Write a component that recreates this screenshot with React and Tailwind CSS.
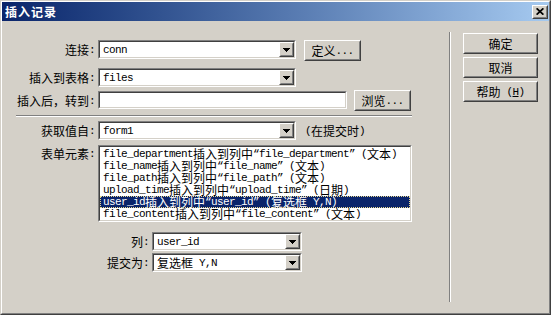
import React from "react";

const MONO = "[font-family:'Liberation_Mono',monospace] text-[11px] tracking-[-0.6px]";
const CJK = "[font-family:'Noto_Sans_CJK_SC',sans-serif] text-[12px]";
const CJK_RE = /[\u3000-\u303f\u4e00-\u9fff\uff00-\uffef]/;

// splits text into CJK runs (12px) and half-width runs (6px mono)
const Mix = ({ text }) =>
  text
    .split(/([\u3000-\u303f\u4e00-\u9fff\uff00-\uffef]+)/)
    .filter(Boolean)
    .map((p, i) => (
      <span key={i} className={(CJK_RE.test(p) ? CJK : MONO) + " whitespace-pre leading-[12px]"}>
        {p}
      </span>
    ));

const Sunken = ({ className = "", children }) => (
  <div className={"border border-t-[#808080] border-l-[#808080] border-r-white border-b-white " + className}>
    <div className="h-full border border-t-[#404040] border-l-[#404040] border-r-[#d4d0c8] border-b-[#d4d0c8] bg-white">
      {children}
    </div>
  </div>
);

const Raised = ({ className = "", children }) => (
  <div className={"border border-t-white border-l-white border-r-[#404040] border-b-[#404040] " + className}>
    <div className="h-full border border-t-[#d4d0c8] border-l-[#d4d0c8] border-r-[#808080] border-b-[#808080] bg-[#d4d0c8] flex items-center justify-center">
      {children}
    </div>
  </div>
);

const Arrow = () => (
  <svg width="7" height="4" shapeRendering="crispEdges">
    <path d="M0 0h7v1h-1v1h-1v1h-1v1h-1v-1h-1v-1h-1v-1h-1z" fill="#000" />
  </svg>
);

const Combo = ({ value, className }) => (
  <Sunken className={className}>
    <div className="h-full flex">
      <div className="flex-1 flex items-center pl-[3px] text-black">
        <Mix text={value} />
      </div>
      <Raised className="w-[15px] h-full">
        <Arrow />
      </Raised>
    </div>
  </Sunken>
);

const Label = ({ text, className }) => (
  <div className={"flex justify-end items-center pr-[3px] text-black " + className}>
    <Mix text={text} />
  </div>
);

const Button = ({ children, className }) => (
  <Raised className={"h-[21px] text-black " + className}>{children}</Raised>
);

const items = [
  "file_department插入到列中“file_department” (文本)",
  "file_name插入到列中“file_name” (文本)",
  "file_path插入到列中“file_path” (文本)",
  "upload_time插入到列中“upload_time” (日期)",
  "user_id插入到列中“user_id” (复选框 Y,N)",
  "file_content插入到列中“file_content” (文本)",
];

export default function App() {
  return (
    <div className="w-[551px] h-[315px] border border-t-[#d4d0c8] border-l-[#d4d0c8] border-r-[#404040] border-b-[#404040] bg-[#d4d0c8]">
      <div className="h-full flex flex-col border border-t-white border-l-white border-r-[#808080] border-b-[#808080]">
        {/* title bar */}
        <div className="h-[19px] flex items-center justify-between pl-[3px] pr-[1px] bg-linear-to-r from-[#0a246a] to-[#a6caf0]">
          <span className={CJK + " font-bold text-white tracking-[1px] leading-[12px]"}>插入记录</span>
          <Raised className="w-[16px] h-[14px]">
            <svg width="8" height="7">
              <path d="M0.6 0.3L7.4 6.7M7.4 0.3L0.6 6.7" stroke="#000" strokeWidth="1.7" />
            </svg>
          </Raised>
        </div>

        <div className="flex flex-1">
          {/* form */}
          <div className="w-[447px] flex flex-col">
            <div className="mt-[19px] flex items-start">
              <Label text="连接:" className="w-[96px] h-[19px]" />
              <Combo value="conn" className="w-[198px] h-[19px]" />
              <Button className="ml-[8px] w-[57px]">
                <Mix text="定义..." />
              </Button>
            </div>
            <div className="mt-[7px] flex items-start">
              <Label text="插入到表格:" className="w-[96px] h-[19px]" />
              <Combo value="files" className="w-[198px] h-[19px]" />
            </div>
            <div className="mt-[3px] flex items-start">
              <Label text="插入后，转到:" className="w-[96px] h-[21px]" />
              <Sunken className="mt-px w-[249px] h-[18px]" />
              <Button className="ml-[7px] w-[57px]">
                <Mix text="浏览..." />
              </Button>
            </div>
            <div className="mt-[4px] ml-[14px] w-[396px] h-[2px] border-t border-t-[#808080] border-b border-b-white" />
            <div className="mt-[4px] flex items-center">
              <Label text="获取值自:" className="w-[96px] h-[19px]" />
              <Combo value="form1" className="w-[198px] h-[19px]" />
              <div className="ml-[9px] flex items-center text-black">
                <Mix text="(在提交时)" />
              </div>
            </div>
            <div className="mt-[5px] flex items-start">
              <Label text="表单元素:" className="w-[96px] h-[12px] mt-[3px]" />
              <Sunken className="w-[314px] h-[77px]">
                <div className="pt-px flex flex-col">
                  {items.map((t, i) => (
                    <div
                      key={i}
                      className={
                        "h-[12px] flex items-center pl-[3px] " +
                        (i === 4
                          ? "bg-[#0a246a] text-white outline-1 outline-dotted outline-[#e8d890] -outline-offset-1"
                          : "text-black")
                      }
                    >
                      <Mix text={t} />
                    </div>
                  ))}
                </div>
              </Sunken>
            </div>
            <div className="mt-[10px] flex items-start">
              <Label text="列:" className="w-[150px] h-[19px]" />
              <Combo value="user_id" className="w-[150px] h-[19px]" />
            </div>
            <div className="mt-[2px] flex items-start">
              <Label text="提交为:" className="w-[150px] h-[19px]" />
              <Combo value="复选框 Y,N" className="w-[150px] h-[19px]" />
            </div>
          </div>

          {/* divider */}
          <div className="mt-[11px] h-[270px] w-[2px] border-l border-l-[#808080] border-r border-r-white" />

          {/* buttons */}
          <div className="ml-[12px] mt-[12px] flex flex-col gap-[3px]">
            <Button className="w-[75px]">
              <span className={CJK}>确定</span>
            </Button>
            <Button className="w-[75px]">
              <span className={CJK}>取消</span>
            </Button>
            <Button className="w-[75px]">
              <span className={CJK + " leading-[12px]"}>帮助</span>
              <span className={MONO + " leading-[12px] whitespace-pre"}>
                {" "}(<span className="underline">H</span>)
              </span>
            </Button>
          </div>
        </div>
      </div>
    </div>
  );
}
